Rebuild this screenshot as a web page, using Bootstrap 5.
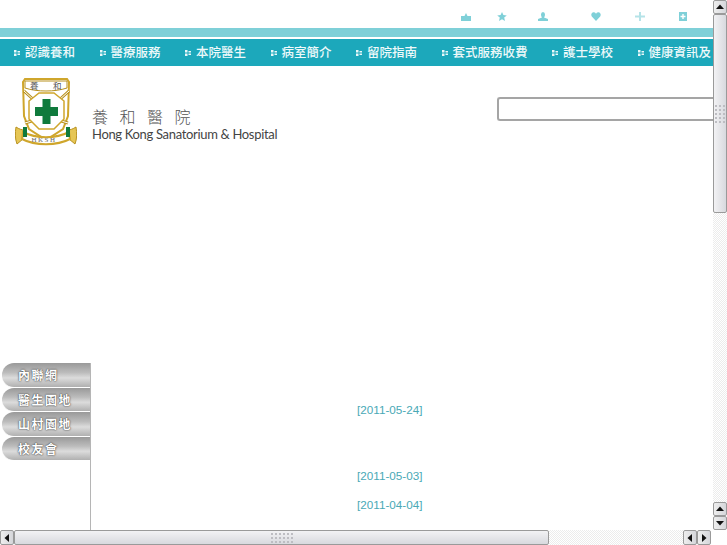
<!DOCTYPE html>
<html lang="zh-Hant">
<head>
<meta charset="UTF-8">
<title>養和醫院 Hong Kong Sanatorium &amp; Hospital</title>
<link href="https://cdn.jsdelivr.net/npm/bootstrap@5.3.0/dist/css/bootstrap.min.css" rel="stylesheet">
<script src="https://cdn.jsdelivr.net/npm/bootstrap@5.3.0/dist/js/bootstrap.bundle.min.js"></script>
<style>
html, body { height: 545px; overflow: hidden; }
body { font-family: "Liberation Sans", "Noto Sans CJK TC", sans-serif; background: #fff; }
.shell { width: 727px; height: 545px; }
.page-area { height: 530px; }
.page-main { width: 713px; overflow: hidden; }
.top-icons { height: 28px; padding: 12px 0 0 461px; }
.top-icons svg { width: 10px; height: 9px; fill: #7fd0d8; display: block; }
.top-icons .i1 { margin-right: 26px; }
.top-icons .i2 { margin-right: 31px; }
.top-icons .i3 { margin-right: 43px; }
.top-icons .i4 { margin-right: 34px; }
.top-icons .i5 { margin-right: 33px; }
.light-bar { height: 9px; background: #7fd0d8; }
.main-nav { margin-top: 2px; height: 27px; background: #1ca8bb; padding-left: 14px; gap: 24.5px; white-space: nowrap; overflow: hidden; }
.main-nav a { color: #eef9fa; text-decoration: none; font-size: 12.5px; font-family: "Noto Sans CJK TC", sans-serif; font-weight: 500; line-height: 25px; gap: 5px; padding-bottom: 2px; }
.nav-dot { width: 6px; height: 6px; flex: none; fill: #e9f7f9; margin-top: 2px; }
.head-row { height: 297px; }
.logo-box { padding: 12px 0 0 15px; gap: 15px; }
.logo-box svg { width: 62px; height: 68px; display: block; }
.hosp-name { padding-top: 28px; width: 200px; }
.hosp-zh { font-family: "Noto Sans CJK TC", serif; font-size: 16px; font-weight: 300; letter-spacing: 11.5px; line-height: 20px; color: #555; margin-bottom: 0; }
.hosp-en { font-family: "Lato", sans-serif; font-size: 13px; line-height: 16px; color: #444; letter-spacing: -.33px; white-space: nowrap; }
.search-box { margin: 31px 0 0 205px; width: 216px; flex: none; }
.search-box input { width: 100%; height: 24px; border: 2px solid #a5a5a5; border-right: 0; border-radius: 3px 0 0 3px; display: block; background: #fff; }
.body-row { height: 167px; }
.side-col { width: 91px; border-right: 1px solid #b5b5b5; flex: none; }
.side-btn { height: 24.5px; border-radius: 12px 0 0 12px; margin-left: 2px; border-bottom: 1px solid #fff; background: linear-gradient(#999, #bcbcbc 40%, #dcdcdc 62%, #b0b0b0); color: #fff; font-family: "Noto Sans CJK TC", sans-serif; font-size: 12px; font-weight: 700; line-height: 24px; letter-spacing: 1.5px; text-shadow: 0 0 2px #444, 0 0 1px #444; padding-left: 16px; }
.news-col { padding-left: 266px; color: #4aa9b6; font-size: 11.7px; line-height: 16px; }
.d1 { margin-top: 39px; }
.d2 { margin-top: 50px; }
.d3 { margin-top: 13px; }
.vbar { width: 14px; flex: none; }
.sb-btn { background: linear-gradient(90deg, #eee, #d5d6da); border: 1px solid #9a9a9a; border-radius: 2px; }
.vbar .sb-btn { height: 14px; }
.hbar .sb-btn { width: 14px; }
.sb-btn svg { width: 8px; height: 8px; fill: #111; }
.v-thumb { height: 199px; background: linear-gradient(90deg, #f2f2f4, #d8d9de); border: 1px solid #9a9a9a; border-radius: 2px; }
.h-thumb { width: 535px; background: linear-gradient(#f2f2f4, #d8d9de); border: 1px solid #9a9a9a; border-radius: 2px; }
.grip { display: grid; gap: 2px; }
.grip i { width: 2px; height: 2px; background: #bdbdc2; }
.v-grip { grid-template-columns: repeat(3, 2px); }
.h-grip { grid-template-columns: repeat(6, 2px); }
.sb-track { background: repeating-conic-gradient(#ececec 0 25%, #fff 0 50%) 0 0 / 2px 2px; }
.hbar { height: 15px; }
.corner { width: 16px; flex: none; }
</style>
</head>
<body>
<div class="shell d-flex flex-column">
  <div class="page-area d-flex">
    <div class="page-main">
      <div class="top-icons d-flex">
        <svg class="i1" viewBox="0 0 10 9"><path d="M3.500 4 5 1l1.500 3H10v5H0V4z"/></svg>
        <svg class="i2" viewBox="0 0 10 9"><path d="M5 0l1.400 3.100 3.400.3-2.600 2.200.8 3.400L5 7.200 2 9l.8-3.400L.2 3.400l3.400-.3z"/></svg>
        <svg class="i3" viewBox="0 0 10 9"><path d="M3 2.500a2 2.500 0 1 1 4 0c0 1.500-.7 2.500-1 3l4 1.500V9H0V7l4-1.500c-.3-.5-1-1.500-1-3z"/></svg>
        <svg class="i4" viewBox="0 0 10 9"><path d="M5 9 .8 4.500C-.6 2.500 1-.3 3 .2c1 .2 1.600.8 2 1.500.4-.7 1-1.300 2-1.500 2-.5 3.600 2.300 2.200 4.300z"/></svg>
        <svg class="i5" viewBox="0 0 10 9"><path fill="#b5e3e8" d="M4 0h2v3.500h4v2H6V9H4V5.500H0v-2h4z"/></svg>
        <svg viewBox="0 0 10 9"><path fill-rule="evenodd" d="M1 0h8v9H1zM4.300 2v1.800H2.500v1.400h1.800V7h1.400V5.200h1.800V3.800H5.700V2z"/></svg>
      </div>
      <div class="light-bar"></div>
      <nav class="main-nav d-flex">
        <a href="#" class="d-flex align-items-center"><svg class="nav-dot" viewBox="0 0 6 6"><path d="M0 0h2.500v2.500H0zM3.500 1H6v1.500H3.500zM0 3.500h2.500V6H0zM3.500 3.500H6V5H3.500z"/></svg>認識養和</a>
        <a href="#" class="d-flex align-items-center"><svg class="nav-dot" viewBox="0 0 6 6"><path d="M0 0h2.500v2.500H0zM3.500 1H6v1.500H3.500zM0 3.500h2.500V6H0zM3.500 3.500H6V5H3.500z"/></svg>醫療服務</a>
        <a href="#" class="d-flex align-items-center"><svg class="nav-dot" viewBox="0 0 6 6"><path d="M0 0h2.500v2.500H0zM3.500 1H6v1.500H3.500zM0 3.500h2.500V6H0zM3.500 3.500H6V5H3.500z"/></svg>本院醫生</a>
        <a href="#" class="d-flex align-items-center"><svg class="nav-dot" viewBox="0 0 6 6"><path d="M0 0h2.500v2.500H0zM3.500 1H6v1.500H3.500zM0 3.500h2.500V6H0zM3.500 3.500H6V5H3.500z"/></svg>病室簡介</a>
        <a href="#" class="d-flex align-items-center"><svg class="nav-dot" viewBox="0 0 6 6"><path d="M0 0h2.500v2.500H0zM3.500 1H6v1.500H3.500zM0 3.500h2.500V6H0zM3.500 3.500H6V5H3.500z"/></svg>留院指南</a>
        <a href="#" class="d-flex align-items-center"><svg class="nav-dot" viewBox="0 0 6 6"><path d="M0 0h2.500v2.500H0zM3.500 1H6v1.500H3.500zM0 3.500h2.500V6H0zM3.500 3.500H6V5H3.500z"/></svg>套式服務收費</a>
        <a href="#" class="d-flex align-items-center"><svg class="nav-dot" viewBox="0 0 6 6"><path d="M0 0h2.500v2.500H0zM3.500 1H6v1.500H3.500zM0 3.500h2.500V6H0zM3.500 3.500H6V5H3.500z"/></svg>護士學校</a>
        <a href="#" class="d-flex align-items-center"><svg class="nav-dot" viewBox="0 0 6 6"><path d="M0 0h2.500v2.500H0zM3.500 1H6v1.500H3.500zM0 3.500h2.500V6H0zM3.500 3.500H6V5H3.500z"/></svg>健康資訊及</a>
      </nav>
      <div class="head-row d-flex">
        <div class="logo-box d-flex">
          <svg viewBox="0 0 62 68">
            <path d="M10 1h42l2 3-1 34-5 13-17 11-17-11-5-13L8 4z" fill="#fff" stroke="#cfa62c" stroke-width="2"/>
            <path d="M10 3h42v7c-12 4-30 4-42 0z" fill="#fff" stroke="#b8911f" stroke-width="1"/>
            <text x="15" y="10.500" font-size="8.500" fill="#555" font-family="Noto Sans CJK TC">養</text>
            <text x="38" y="10.500" font-size="8.500" fill="#555" font-family="Noto Sans CJK TC">和</text>
            <path d="M9 13 20 23M54 13 43 23M10 45 20 42M53 45 43 42" stroke="#b8911f" stroke-width="3"/>
            <path d="M9 13 20 23M54 13 43 23M10 45 20 42M53 45 43 42" stroke="#fff" stroke-width="1"/>
            <path d="M24 15h15l10 8v18l-10 10H24L14 41V23z" fill="#fff" stroke="#cfa62c" stroke-width="1.500"/>
            <path d="M27.500 21h8v8h7.500v9h-7.500v8h-8v-8H20v-9h7.500z" fill="#0f7a3c"/>
            <path d="M1 49c3 2 6 3 8 3l-1 9-6 5c-2-5-2-11-1-17zM61 49c-3 2-6 3-8 3l1 9 6 5c2-5 2-11 1-17z" fill="#e6c655" stroke="#b8911f"/>
            <path d="M8 54c13 7 33 7 46 0l1 7c-13 7-35 7-48 0z" fill="#fff" stroke="#cfa62c" stroke-width="2"/>
            <path d="M8 49h4v10H8zM51 49h4v10h-4z" fill="#0f7a3c"/>
            <text x="16.500" y="63.500" font-size="7" fill="#666" letter-spacing="1.500" font-family="Liberation Serif">HKSH</text>
          </svg>
          <div class="hosp-name">
            <p class="hosp-zh">養和醫院</p>
            <div class="hosp-en">Hong Kong Sanatorium &amp; Hospital</div>
          </div>
        </div>
        <div class="search-box"><input type="text" aria-label="搜尋"></div>
      </div>
      <div class="body-row d-flex">
        <div class="side-col">
          <div class="side-btn">內聯網</div>
          <div class="side-btn">醫生園地</div>
          <div class="side-btn">山村園地</div>
          <div class="side-btn">校友會</div>
        </div>
        <div class="news-col">
          <div class="d1">[2011-05-24]</div>
          <div class="d2">[2011-05-03]</div>
          <div class="d3">[2011-04-04]</div>
        </div>
      </div>
    </div>
    <div class="vbar d-flex flex-column">
      <div class="sb-btn d-flex align-items-center justify-content-center"><svg viewBox="0 0 8 8"><path d="M4 1.500 8 6H0z"/></svg></div>
      <div class="v-thumb d-flex align-items-center justify-content-center"><div class="grip v-grip"><i></i><i></i><i></i><i></i><i></i><i></i><i></i><i></i><i></i><i></i><i></i><i></i><i></i><i></i><i></i></div></div>
      <div class="sb-track flex-grow-1"></div>
      <div class="sb-btn d-flex align-items-center justify-content-center"><svg viewBox="0 0 8 8"><path d="M4 1.500 8 6H0z"/></svg></div>
      <div class="sb-btn d-flex align-items-center justify-content-center"><svg viewBox="0 0 8 8"><path d="M4 6.500 8 2H0z"/></svg></div>
    </div>
  </div>
  <div class="hbar d-flex">
    <div class="sb-btn d-flex align-items-center justify-content-center"><svg viewBox="0 0 8 8"><path d="M1.500 4 6 0v8z"/></svg></div>
    <div class="h-thumb d-flex align-items-center justify-content-center"><div class="grip h-grip"><i></i><i></i><i></i><i></i><i></i><i></i><i></i><i></i><i></i><i></i><i></i><i></i><i></i><i></i><i></i><i></i><i></i><i></i></div></div>
    <div class="sb-track flex-grow-1"></div>
    <div class="sb-btn d-flex align-items-center justify-content-center"><svg viewBox="0 0 8 8"><path d="M1.500 4 6 0v8z"/></svg></div>
    <div class="sb-btn d-flex align-items-center justify-content-center"><svg viewBox="0 0 8 8"><path d="M6.500 4 2 0v8z"/></svg></div>
    <div class="corner"></div>
  </div>
</div>
</body>
</html>
